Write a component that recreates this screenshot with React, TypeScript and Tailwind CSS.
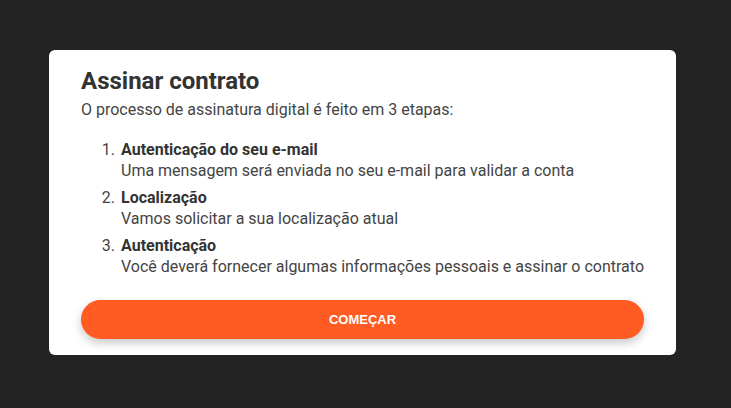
const steps = [
  {
    title: 'Autenticação do seu e-mail',
    description: 'Uma mensagem será enviada no seu e-mail para validar a conta',
  },
  {
    title: 'Localização',
    description: 'Vamos solicitar a sua localização atual',
  },
  {
    title: 'Autenticação',
    description: 'Você deverá fornecer algumas informações pessoais e assinar o contrato',
  },
];

function StepItem({ title, description }: { title: string; description: string }) {
  return (
    <li className="pl-[2px] leading-[21px]">
      <div className="font-bold text-[#333333]">{title}</div>
      <div className="whitespace-nowrap">{description}</div>
    </li>
  );
}

export default function App() {
  return (
    <div className="h-[408px] w-full overflow-hidden bg-[#232323] pl-[49px] pt-[50px] font-['Roboto',sans-serif] text-[#444444]">
      <div className="w-[627px] rounded-[6px] bg-white px-[32px] pb-[16px] pt-[17px]">
        <h1 className="text-[24px] font-bold leading-[28px] text-[#333333]">Assinar contrato</h1>
        <p className="mt-[5px] text-[16px] leading-[20px]">O processo de assinatura digital é feito em 3 etapas:</p>
        <ol className="mt-[19px] list-decimal space-y-[6px] pl-[38px] text-[16px]">
          {steps.map((s) => (
            <StepItem key={s.title} title={s.title} description={s.description} />
          ))}
        </ol>
        <button
          type="button"
          className="mt-[23px] flex h-[39px] w-full items-center justify-center rounded-full bg-[#ff5b22] font-['Liberation_Sans',Arial,sans-serif] text-[13px] font-bold text-white shadow-[0_4px_10px_rgba(0,0,0,0.22)]"
        >
          COMEÇAR
        </button>
      </div>
    </div>
  );
}
